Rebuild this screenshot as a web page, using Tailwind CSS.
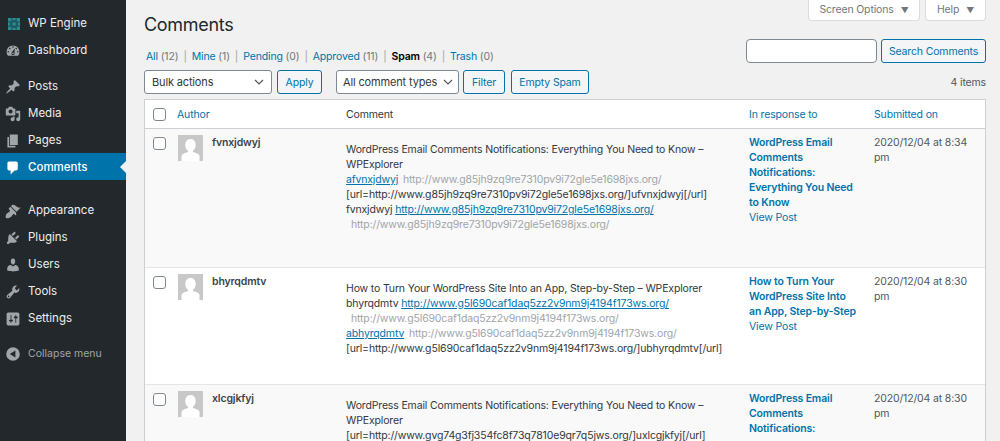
<!DOCTYPE html>
<html>
<head>
<meta charset="utf-8">
<script src="https://cdn.jsdelivr.net/npm/@tailwindcss/browser@4"></script>
</head>
<body class="m-0 h-[441px] w-[1000px] overflow-hidden bg-[#f1f1f1] font-['Inter','Liberation_Sans',sans-serif] text-[11px] text-[#3c434a]">
<div class="flex h-[441px]">
  <!-- Sidebar -->
  <nav class="w-[126px] shrink-0 bg-[#23282d] text-[11.5px] text-[#eee] pt-[9px]">
    <a class="flex h-[27px] items-center pt-[2px] pl-[8px] gap-[8px]">
      <svg class="w-[12px] h-[12px]" viewBox="0 0 12 12"><rect width="12" height="12" fill="#1d5a60"/><path fill="#2f8a90" d="M0 0h3.200v3.200H0zM4.400 0h3.200v2H4.400zM8.800 0H12v3.200H8.800zM0 4.400h2v3.200H0zM4.400 4.400h3.200v3.200H4.400zM10 4.400h2v3.200h-2zM0 8.800h3.200V12H0zM4.400 10h3.200v2H4.400zM8.800 8.800H12V12H8.800z"/></svg>
      <span>WP Engine</span>
    </a>
    <a class="flex h-[27px] items-center pt-[2px] pl-[5px] gap-[7px]">
      <svg class="w-[16px] h-[16px]" viewBox="0 0 20 20" fill="#a0a5aa"><path d="M3.76 16h12.48c1.1-1.37 1.76-3.11 1.76-5 0-4.42-3.58-8-8-8s-8 3.58-8 8c0 1.89.66 3.63 1.76 5zM10 4c.55 0 1 .45 1 1s-.45 1-1 1-1-.45-1-1 .45-1 1-1zM6 6c.55 0 1 .45 1 1s-.45 1-1 1-1-.45-1-1 .45-1 1-1zm8 0c.55 0 1 .45 1 1s-.45 1-1 1-1-.45-1-1 .45-1 1-1zm-5.370 5.550L12 7v6c0 1.100-.9 2-2 2s-2-.9-2-2c0-.57.24-1.080.63-1.450zM4 10c.55 0 1 .45 1 1s-.45 1-1 1-1-.45-1-1 .45-1 1-1zm12 0c.55 0 1 .45 1 1s-.45 1-1 1-1-.45-1-1 .45-1 1-1zm-5 3c0-.55-.45-1-1-1s-1 .45-1 1 .45 1 1 1 1-.45 1-1z" fill-rule="evenodd"/></svg>
      <span>Dashboard</span>
    </a>
    <div class="h-[9px]"></div>
    <a class="flex h-[27px] items-center pt-[2px] pl-[5px] gap-[7px]">
      <svg class="w-[16px] h-[16px]" viewBox="0 0 20 20" fill="#a0a5aa"><path d="M10.44 3.02l1.82-1.82 6.36 6.35-1.83 1.82c-1.05-.68-2.48-.57-3.41.36l-.75.75c-.92.93-1.04 2.35-.35 3.41l-1.83 1.82-2.41-2.41-2.8 2.79c-.42.42-3.38 2.71-3.8 2.29s1.86-3.39 2.28-3.81l2.79-2.79L4.1 9.36l1.83-1.82c1.05.69 2.48.57 3.4-.36l.75-.75c.93-.92 1.05-2.35.36-3.41z"/></svg>
      <span>Posts</span>
    </a>
    <a class="flex h-[27px] items-center pt-[2px] pl-[5px] gap-[7px]">
      <svg class="w-[16px] h-[16px]" viewBox="0 0 20 20" fill="#a0a5aa"><path d="M13 11V4c0-.55-.45-1-1-1h-1.670L9 1H5L3.670 3H2c-.55 0-1 .45-1 1v7c0 .55.45 1 1 1h10c.55 0 1-.45 1-1zM7 4.500c1.380 0 2.500 1.120 2.500 2.500S8.380 9.500 7 9.500 4.500 8.380 4.500 7 5.620 4.500 7 4.500zM14 6h5v10.500c0 1.380-1.120 2.500-2.500 2.500S14 17.880 14 16.500s1.120-2.500 2.500-2.500c.17 0 .34.02.5.05V9h-3V6zm-4 8.050V13h2v3.500c0 1.380-1.120 2.500-2.500 2.500S7 17.880 7 16.500 8.120 14 9.500 14c.17 0 .34.02.5.05z"/></svg>
      <span>Media</span>
    </a>
    <a class="flex h-[27px] items-center pt-[2px] pl-[5px] gap-[7px]">
      <svg class="w-[16px] h-[16px]" viewBox="0 0 20 20" fill="#a0a5aa"><path d="M6 15V2h10v13H6zm-1 1h8v2H3V5h2v11z"/></svg>
      <span>Pages</span>
    </a>
    <a class="relative flex h-[27px] items-center pt-[2px] pl-[5px] gap-[7px] bg-[#0073aa] text-white font-medium">
      <svg class="w-[16px] h-[16px]" viewBox="0 0 20 20" fill="#fff"><path d="M5 2h9c1.100 0 2 .9 2 2v7c0 1.100-.9 2-2 2h-2l-5 5v-5H5c-1.100 0-2-.9-2-2V4c0-1.100.9-2 2-2z"/></svg>
      <span>Comments</span>
      <span class="absolute right-0 top-[8px] h-0 w-0 border-y-[6px] border-r-[6px] border-y-transparent border-r-[#f1f1f1]"></span>
    </a>
    <div class="h-[16px]"></div>
    <a class="flex h-[27px] items-center pt-[2px] pl-[5px] gap-[7px]">
      <svg class="w-[16px] h-[16px]" viewBox="0 0 20 20" fill="#a0a5aa"><path d="M14.480 11.060L7.410 3.990l1.500-1.500c.5-.56 2.300-.47 3.510.32 1.210.8 1.430 1.280 2.910 2.100 1.180.64 2.450 1.260 4.450.85zm-.71.71L6.700 4.700 4.930 6.470c-.39.39-.39 1.020 0 1.410l1.060 1.060c.39.39.39 1.030 0 1.420-.6.6-1.430 1.110-2.210 1.690-.35.26-.7.53-1.010.84C1.430 13.710 0 17.290 1.350 18.650c1.360 1.350 4.940-.08 6.350-1.430.31-.31.58-.66.84-1.010.58-.78 1.090-1.610 1.690-2.210.39-.39 1.030-.39 1.420 0l1.060 1.060c.39.39 1.020.39 1.410 0z"/></svg>
      <span>Appearance</span>
    </a>
    <a class="flex h-[27px] items-center pt-[2px] pl-[5px] gap-[7px]">
      <svg class="w-[16px] h-[16px]" viewBox="0 0 20 20" fill="#a0a5aa"><path d="M13.110 4.360L9.870 7.600 8 5.730l3.240-3.240c.35-.34 1.050-.2 1.560.32.52.51.66 1.210.31 1.550zm-8 1.770l.91-1.120 9.010 9.010-1.190.84c-.71.71-2.630 1.160-3.820 1.160H6.140L4.900 17.260c-.59.59-1.540.59-2.120 0-.59-.58-.59-1.530 0-2.120l1.240-1.240v-3.880c0-1.130.4-3.190 1.090-3.890zm7.260 3.970l3.240-3.240c.34-.35 1.040-.21 1.550.31.52.51.66 1.210.31 1.550l-3.240 3.250z"/></svg>
      <span>Plugins</span>
    </a>
    <a class="flex h-[27px] items-center pt-[2px] pl-[5px] gap-[7px]">
      <svg class="w-[16px] h-[16px]" viewBox="0 0 20 20" fill="#a0a5aa"><path d="M10 9.250c-2.270 0-2.730-3.440-2.730-3.440C7 4.020 7.820 2 9.970 2c2.160 0 2.980 2.020 2.710 3.810 0 0-.41 3.440-2.680 3.440zm0 2.570L12.720 10c2.390 0 4.520 2.330 4.520 4.530v2.490s-3.650 1.130-7.240 1.130c-3.650 0-7.240-1.130-7.240-1.130v-2.490c0-2.250 1.940-4.480 4.470-4.480z"/></svg>
      <span>Users</span>
    </a>
    <a class="flex h-[27px] items-center pt-[2px] pl-[5px] gap-[7px]">
      <svg class="w-[16px] h-[16px]" viewBox="0 0 20 20" fill="#a0a5aa"><path d="M16.680 9.770c-1.340 1.340-3.300 1.670-4.950.99l-5.410 6.520c-.99.99-2.590.99-3.580 0s-.99-2.590 0-3.570l6.520-5.420c-.68-1.650-.35-3.610.99-4.950 1.280-1.280 3.120-1.620 4.720-1.060l-2.890 2.890 2.820 2.820 2.860-2.870c.53 1.580.18 3.390-1.080 4.650zM3.810 16.210c.4.39 1.040.39 1.430 0 .4-.4.4-1.040 0-1.430-.39-.4-1.030-.4-1.430 0-.39.39-.39 1.030 0 1.430z"/></svg>
      <span>Tools</span>
    </a>
    <a class="flex h-[27px] items-center pt-[2px] pl-[5px] gap-[7px]">
      <svg class="w-[16px] h-[16px]" viewBox="0 0 20 20" fill="#a0a5aa"><path d="M18 16V4c0-1.100-.9-2-2-2H4c-1.100 0-2 .9-2 2v12c0 1.100.9 2 2 2h12c1.100 0 2-.9 2-2zM8 11h1c.55 0 1 .45 1 1s-.45 1-1 1H8v1.500c0 .28-.22.5-.5.5s-.5-.22-.5-.5V13H6c-.55 0-1-.45-1-1s.45-1 1-1h1V5.500c0-.28.22-.5.5-.5s.5.22.5.5V11zm5-2h-1c-.55 0-1-.45-1-1s.45-1 1-1h1V5.500c0-.28.22-.5.5-.5s.5.22.5.5V7h1c.55 0 1 .45 1 1s-.45 1-1 1h-1v5.500c0 .28-.22.5-.5.5s-.5-.22-.5-.5V9z"/></svg>
      <span>Settings</span>
    </a>
    <a class="mt-[9px] flex h-[27px] items-center pl-[5px] gap-[7px] text-[#a0a5aa] text-[10.5px]">
      <svg class="w-[16px] h-[16px]" viewBox="0 0 20 20" fill="#a0a5aa"><path fill-rule="evenodd" d="M10 1.500a8.500 8.500 0 1 1 0 17 8.500 8.500 0 0 1 0-17zM13 5.500 6 10l7 4.500z"/></svg>
      <span>Collapse menu</span>
    </a>
  </nav>

  <!-- Main -->
  <main class="relative flex-1 pl-[18px] pr-[14px] tracking-[-0.15px]">
    <div class="absolute right-[14px] top-0 flex gap-[5px] text-[10.5px] text-[#72777c]">
      <div class="flex h-[21px] w-[112px] items-center justify-center gap-[7px] rounded-b-[4px] border border-t-0 border-[#dcdcde] bg-white">Screen Options <span class="text-[8px]">▼</span></div>
      <div class="flex h-[21px] w-[61px] items-center justify-center gap-[7px] rounded-b-[4px] border border-t-0 border-[#dcdcde] bg-white">Help <span class="text-[8px]">▼</span></div>
    </div>

    <h1 class="m-0 pt-[12px] text-[18px] leading-[26px] font-normal tracking-[-0.3px] text-[#23282d]">Comments</h1>

    <div class="mt-[11px] flex h-[15px] items-center gap-[5px] pl-[2px] text-[10.5px] text-[#72777c]">
      <span><a class="text-[#0073aa]">All</a> (12)</span><span class="text-[#a0a5aa]">|</span>
      <span><a class="text-[#0073aa]">Mine</a> (1)</span><span class="text-[#a0a5aa]">|</span>
      <span><a class="text-[#0073aa]">Pending</a> (0)</span><span class="text-[#a0a5aa]">|</span>
      <span><a class="text-[#0073aa]">Approved</a> (11)</span><span class="text-[#a0a5aa]">|</span>
      <span><b class="font-semibold text-black">Spam</b> (4)</span><span class="text-[#a0a5aa]">|</span>
      <span><a class="text-[#0073aa]">Trash</a> (0)</span>
    </div>

    <div class="absolute right-[14px] top-[39px] flex gap-[4px]">
      <div class="h-[24px] w-[131px] rounded-[4px] border border-[#7e8993] bg-white"></div>
      <div class="flex h-[24px] w-[105px] items-center justify-center rounded-[3px] border border-[#0073aa] bg-[#f3f5f6] pt-[1px] text-[10.5px] text-[#0073aa]">Search Comments</div>
    </div>

    <div class="mt-[6px] flex h-[24px] items-center text-[10.5px]">
      <div class="relative flex h-[24px] w-[128px] items-center rounded-[3px] border border-[#7e8993] bg-white pl-[7px] text-[11px] text-[#32373c]">Bulk actions
        <svg class="absolute right-[7px] top-[8px] h-[6px] w-[10px]" viewBox="0 0 10 6" fill="none" stroke="#555" stroke-width="1.2"><path d="M1 1l4 4 4-4"/></svg>
      </div>
      <div class="ml-[5px] flex h-[24px] w-[45px] items-center justify-center rounded-[3px] border border-[#0073aa] bg-[#f3f5f6] pt-[1px] text-[#0073aa]">Apply</div>
      <div class="relative ml-[14px] flex h-[24px] w-[123px] items-center rounded-[3px] border border-[#7e8993] bg-white pl-[6px] text-[11px] text-[#32373c]">All comment types
        <svg class="absolute right-[5px] top-[8px] h-[6px] w-[10px]" viewBox="0 0 10 6" fill="none" stroke="#555" stroke-width="1.2"><path d="M1 1l4 4 4-4"/></svg>
      </div>
      <div class="ml-[4px] flex h-[24px] w-[42px] items-center justify-center rounded-[3px] border border-[#0073aa] bg-[#f3f5f6] pt-[1px] text-[#0073aa]">Filter</div>
      <div class="ml-[6px] flex h-[24px] w-[78px] items-center justify-center rounded-[3px] border border-[#0073aa] bg-[#f3f5f6] pt-[1px] text-[#0073aa]">Empty Spam</div>
    </div>

    <div class="absolute right-[14px] top-[76px] text-[10.5px] leading-[13px] text-[#50575e]">4 items</div>

    <!-- Table -->
    <div class="mt-[5px] border border-b-0 border-[#ccd0d4] bg-white">
      <div class="grid h-[29px] grid-cols-[25px_169px_403px_125px_1fr] items-center border-b border-[#ccd0d4] pt-[1px] text-[10.5px]">
        <div class="pl-[8px]"><span class="block h-[13px] w-[13px] rounded-[3px] border border-[#7e8993] bg-white"></span></div>
        <div class="pl-[7px] text-[#0073aa]">Author</div>
        <div class="pl-[7px] text-[#32373c]">Comment</div>
        <div class="pl-[7px] text-[#0073aa]">In response to</div>
        <div class="pl-[7px] text-[#0073aa]">Submitted on</div>
      </div>

      <div class="grid h-[139px] grid-cols-[25px_169px_403px_125px_1fr] border-b border-[#e5e5e5] bg-[#f9f9f9] text-[10.5px] leading-[15px]">
        <div class="pl-[8px] pt-[8px]"><span class="block h-[13px] w-[13px] rounded-[3px] border border-[#7e8993] bg-white"></span></div>
        <div class="flex gap-[9px] pl-[8px] pt-[6px]">
          <svg class="h-[26px] w-[25px]" viewBox="0 0 25 26"><rect width="25" height="26" fill="#c8c8c8"/><path fill="#fff" d="M12.500 4c3.300 0 5.200 2.600 5.200 6 0 2.600-1.100 4.700-2.700 5.700v1.300c3 .9 6 2.200 6.500 3.700V26H3.500v-5.300c.5-1.500 3.500-2.800 6.500-3.700v-1.300C8.400 14.700 7.300 12.600 7.300 10c0-3.400 1.900-6 5.200-6z"/></svg>
          <b class="font-semibold text-[#3c434a]">fvnxjdwyj</b>
        </div>
        <div class="pl-[7px] pt-[13px] pr-[4px] text-[#32373c]">
          <p>WordPress Email Comments Notifications: Everything You Need to Know – WPExplorer</p>
          <p><a class="text-[#0073aa] underline">afvnxjdwyj</a> <span class="ml-[2px] text-[#a0a5aa]">http://www.g85jh9zq9re7310pv9i72gle5e1698jxs.org/</span></p>
          <p class="whitespace-nowrap">[url=http://www.g85jh9zq9re7310pv9i72gle5e1698jxs.org/]ufvnxjdwyj[/url]</p>
          <p class="whitespace-nowrap">fvnxjdwyj <a class="text-[#0073aa] underline">http://www.g85jh9zq9re7310pv9i72gle5e1698jxs.org/</a></p>
          <p class="pl-[5px] text-[#a0a5aa]">http://www.g85jh9zq9re7310pv9i72gle5e1698jxs.org/</p>
        </div>
        <div class="pl-[7px] pt-[6px] pr-[6px] text-[#0073aa]">
          <b class="block font-semibold">WordPress Email Comments Notifications: Everything You Need to Know</b>
          <span class="block">View Post</span>
        </div>
        <div class="pl-[7px] pt-[6px] pr-[2px] text-[#50575e]">2020/12/04 at 8:34 pm</div>
      </div>

      <div class="grid h-[117px] grid-cols-[25px_169px_403px_125px_1fr] border-b border-[#e5e5e5] bg-white text-[10.5px] leading-[15px]">
        <div class="pl-[8px] pt-[8px]"><span class="block h-[13px] w-[13px] rounded-[3px] border border-[#7e8993] bg-white"></span></div>
        <div class="flex gap-[9px] pl-[8px] pt-[6px]">
          <svg class="h-[26px] w-[25px]" viewBox="0 0 25 26"><rect width="25" height="26" fill="#c8c8c8"/><path fill="#fff" d="M12.500 4c3.300 0 5.200 2.600 5.200 6 0 2.600-1.100 4.700-2.700 5.700v1.300c3 .9 6 2.200 6.500 3.700V26H3.500v-5.300c.5-1.500 3.500-2.800 6.500-3.700v-1.300C8.400 14.700 7.300 12.600 7.300 10c0-3.400 1.900-6 5.200-6z"/></svg>
          <b class="font-semibold text-[#3c434a]">bhyrqdmtv</b>
        </div>
        <div class="pl-[7px] pt-[13px] pr-[4px] text-[#32373c]">
          <p>How to Turn Your WordPress Site Into an App, Step-by-Step – WPExplorer</p>
          <p class="whitespace-nowrap">bhyrqdmtv <a class="text-[#0073aa] underline">http://www.g5l690caf1daq5zz2v9nm9j4194f173ws.org/</a></p>
          <p class="pl-[5px] text-[#a0a5aa]">http://www.g5l690caf1daq5zz2v9nm9j4194f173ws.org/</p>
          <p><a class="text-[#0073aa] underline">abhyrqdmtv</a> <span class="ml-[2px] text-[#a0a5aa]">http://www.g5l690caf1daq5zz2v9nm9j4194f173ws.org/</span></p>
          <p class="whitespace-nowrap">[url=http://www.g5l690caf1daq5zz2v9nm9j4194f173ws.org/]ubhyrqdmtv[/url]</p>
        </div>
        <div class="pl-[7px] pt-[6px] pr-[6px] text-[#0073aa]">
          <b class="block font-semibold">How to Turn Your<br>WordPress Site Into<br>an App, Step-by-Step</b>
          <span class="block">View Post</span>
        </div>
        <div class="pl-[7px] pt-[6px] pr-[2px] text-[#50575e]">2020/12/04 at 8:30 pm</div>
      </div>

      <div class="grid h-[56px] grid-cols-[25px_169px_403px_125px_1fr] bg-[#f9f9f9] text-[10.5px] leading-[15px]">
        <div class="pl-[8px] pt-[8px]"><span class="block h-[13px] w-[13px] rounded-[3px] border border-[#7e8993] bg-white"></span></div>
        <div class="flex gap-[9px] pl-[8px] pt-[6px]">
          <svg class="h-[26px] w-[25px]" viewBox="0 0 25 26"><rect width="25" height="26" fill="#c8c8c8"/><path fill="#fff" d="M12.500 4c3.300 0 5.200 2.600 5.200 6 0 2.600-1.100 4.700-2.700 5.700v1.300c3 .9 6 2.200 6.500 3.700V26H3.500v-5.300c.5-1.500 3.500-2.800 6.500-3.700v-1.300C8.400 14.700 7.300 12.600 7.300 10c0-3.400 1.900-6 5.200-6z"/></svg>
          <b class="font-semibold text-[#3c434a]">xlcgjkfyj</b>
        </div>
        <div class="pl-[7px] pt-[13px] pr-[4px] text-[#32373c]">
          <p>WordPress Email Comments Notifications: Everything You Need to Know – WPExplorer</p>
          <p class="whitespace-nowrap">[url=http://www.gvg74g3fj354fc8f73q7810e9qr7q5jws.org/]uxlcgjkfyj[/url]</p>
        </div>
        <div class="pl-[7px] pt-[6px] pr-[6px] text-[#0073aa]">
          <b class="block font-semibold">WordPress Email Comments Notifications:</b>
        </div>
        <div class="pl-[7px] pt-[6px] pr-[2px] text-[#50575e]">2020/12/04 at 8:30 pm</div>
      </div>
    </div>
  </main>
</div>
</body>
</html>
